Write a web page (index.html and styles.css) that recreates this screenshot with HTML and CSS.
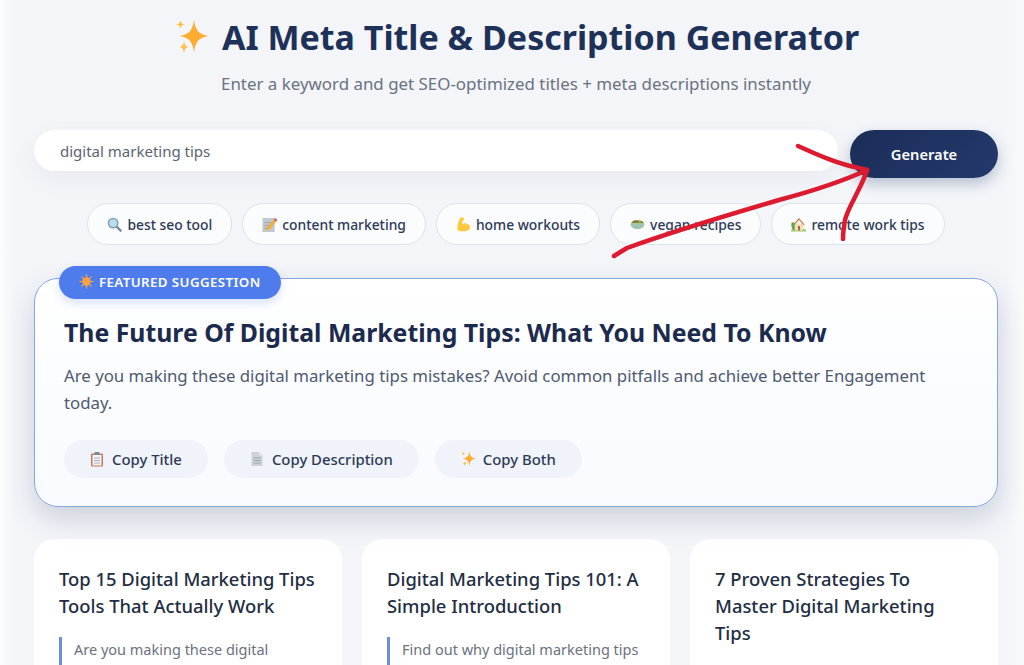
FILE: index.html
```html
<!DOCTYPE html>
<html lang="en">
<head>
    <meta charset="UTF-8">
    <meta name="viewport" content="width=device-width, initial-scale=1.0">
    <title>AI Meta Title &amp; Description Generator</title>
    <link rel="stylesheet" href="styles.css">
</head>
<body>
    <svg class="defs" width="0" height="0" aria-hidden="true">
        <symbol id="sparkles" viewBox="0 0 36 36">
            <path fill="#ffac33" d="M21 .5C22.500 11 25 15 35.500 17 25 19 22.500 23 21 33.500 19.500 23 17 19 6.500 17 17 15 19.500 11 21 .5z"/>
            <path fill="#ffc14d" d="M7.500 1C8 4 9 5 12 5.500 9 6 8 7 7.500 10 7 7 6 6 3 5.500 6 5 7 4 7.500 1zM11 22c.5 3.500 1.500 5 4.500 6-3 1-4 2.500-4.500 6-.5-3.500-1.500-5-4.500-6 3-1 4-2.500 4.500-6z"/>
        </symbol>
        <symbol id="magnifier" viewBox="0 0 16 16">
            <path stroke="#7f8b96" stroke-width="2.600" stroke-linecap="round" d="M10 10l4.500 4.500"/>
            <circle cx="6.500" cy="6.500" r="5" fill="#b9dcef" stroke="#84a0b2" stroke-width="1.600"/>
        </symbol>
        <symbol id="memo" viewBox="0 0 16 16">
            <rect x="0.500" y="1" width="13" height="15" fill="#c3c8cc"/>
            <path stroke="#9aa2a9" d="M2.500 6h9M2.500 9h9M2.500 12h6"/>
            <path fill="#eeb03a" d="M5 11.500L12.500 3l2.500 2-7.500 8.500-3.500 1z"/>
            <path fill="#d9545c" d="M12.500 3l1.500-2 2.500 2-1.500 2z"/>
        </symbol>
        <symbol id="muscle" viewBox="0 0 16 16">
            <path fill="#ffc83d" d="M4.500 1c1.800-.8 3.800-.2 4.200 1 .3 1-.7 1.700-1.700 2L6.500 8c1.700-1.500 4.300-1.600 6.200-.5 2.300 1.400 2.800 4 1.500 5.800-1.300 1.600-4.200 2-7.200 1.900-2.400-.1-4.600-.6-5.400-2C0.800 10.800 2.500 5 4.500 1z"/>
        </symbol>
        <symbol id="salad" viewBox="0 0 16 16">
            <path fill="#5c913b" d="M1 7c.5-2.500 3.500-3.500 7-3.500s6.500 1 7 3.500z"/>
            <circle cx="5.500" cy="4.800" r="1.400" fill="#c9584a"/>
            <circle cx="10.500" cy="4.500" r="1.300" fill="#d8b04a"/>
            <path fill="#9fc4b0" d="M.5 7.500h15c0 3-3.300 5.500-7.500 5.500S.5 10.500.5 7.500z"/>
        </symbol>
        <symbol id="house" viewBox="0 0 16 16">
            <path fill="#9cc46f" d="M0 15.500c0-2 1-3 3-3h10c2 0 3 1 3 3z"/>
            <path fill="#f3dfae" d="M4 7h9v7.500H4z"/>
            <path fill="#c9804a" d="M2.500 8L8.500 1l6 7-1 .8-5-5.500-5 5.500z"/>
            <path fill="#8b6a4a" d="M7.500 9.500h2v5h-2z"/>
            <path fill="#6ba34a" d="M.5 6.500c1-1.500 2.500-1 3.500 0v7H2C.5 11.500 0 9 .5 6.500z"/>
        </symbol>
        <symbol id="sun" viewBox="0 0 16 16">
            <path stroke="#f7a541" stroke-width="1.300" stroke-linecap="round" d="M8 1v14M1 8h14M3 3l10 10M13 3L3 13"/>
            <circle cx="8" cy="8" r="4.500" fill="#f9a03f"/>
        </symbol>
        <symbol id="clipboard" viewBox="0 0 16 16">
            <rect x="2" y="2.500" width="12" height="13" rx="1" fill="#d0765a"/>
            <rect x="3.500" y="4" width="9" height="10.500" fill="#f2f4f5"/>
            <rect x="5.500" y="1" width="5" height="3" fill="#7d8b98"/>
            <path stroke="#a9b2ba" d="M5 7h6M5 9.500h6M5 12h6"/>
        </symbol>
        <symbol id="page" viewBox="0 0 16 16">
            <path fill="#ccd2d8" d="M2.500 1H10l3.500 3.500V15h-11z"/>
            <path fill="#e6e9ec" d="M10 1l3.500 3.500H10z"/>
            <path stroke="#9aa5ae" d="M4.500 7h7M4.500 9.500h7M4.500 12h7"/>
        </symbol>
    </svg>

    <main class="container">
        <header class="hero">
            <h1><svg class="hero-icon"><use href="#sparkles"/></svg>AI Meta Title &amp; Description Generator</h1>
            <p>Enter a keyword and get SEO-optimized titles + meta descriptions instantly</p>
        </header>

        <form class="search-row">
            <input class="keyword-input" type="text" value="digital marketing tips">
            <button class="generate-btn" type="button">Generate</button>
        </form>

        <div class="chips">
            <button class="chip" type="button"><svg class="icon"><use href="#magnifier"/></svg>best seo tool</button>
            <button class="chip" type="button"><svg class="icon"><use href="#memo"/></svg>content marketing</button>
            <button class="chip" type="button"><svg class="icon"><use href="#muscle"/></svg>home workouts</button>
            <button class="chip" type="button"><svg class="icon"><use href="#salad"/></svg>vegan recipes</button>
            <button class="chip" type="button"><svg class="icon"><use href="#house"/></svg>remote work tips</button>
        </div>

        <section class="featured">
            <span class="badge"><svg class="icon"><use href="#sun"/></svg>FEATURED SUGGESTION</span>
            <h2>The Future Of Digital Marketing Tips: What You Need To Know</h2>
            <p>Are you making these digital marketing tips mistakes? Avoid common pitfalls and achieve better Engagement today.</p>
            <div class="copy-actions">
                <button class="copy-btn" type="button"><svg class="icon"><use href="#clipboard"/></svg>Copy Title</button>
                <button class="copy-btn" type="button"><svg class="icon"><use href="#page"/></svg>Copy Description</button>
                <button class="copy-btn" type="button"><svg class="icon"><use href="#sparkles"/></svg>Copy Both</button>
            </div>
        </section>

        <section class="results">
            <article class="card">
                <h3>Top 15 Digital Marketing Tips Tools That Actually Work</h3>
                <p>Are you making these digital</p>
            </article>
            <article class="card">
                <h3>Digital Marketing Tips 101: A Simple Introduction</h3>
                <p>Find out why digital marketing tips</p>
            </article>
            <article class="card">
                <h3>7 Proven Strategies To Master Digital Marketing Tips</h3>
            </article>
        </section>

        <svg class="scribble" viewBox="0 0 1024 665" aria-hidden="true">
            <path d="M798 146c20 9 40 18 61 22l8 2"/>
            <path d="M614 256l13-8c50-18 101-33 152-48 30-8 62-18 88-30"/>
            <path d="M867 170c-3 10-8 19-12 27-4 8-8 15-10 23-1 6-2 13-2 19"/>
        </svg>
    </main>
</body>
</html>
```

FILE: styles.css
```css
* {
    box-sizing: border-box;
}
html, body {
    height: 665px;
    margin: 0;
    overflow: hidden;
}
body {
    font-family: "Noto Sans", Arial, sans-serif;
    background: linear-gradient(90deg, #fdfdfe 0, #f3f5f9 14px, #f3f5f9 1006px, #f9fafc 1024px);
    color: #1e3158;
}
.defs {
    position: absolute;
}
.container {
    position: relative;
    height: 665px;
    padding: 0 26px 0 34px;
}
.icon {
    width: 15px;
    height: 15px;
    flex: none;
}

.hero {
    text-align: center;
    padding-top: 13px;
}
.hero h1 {
    display: flex;
    justify-content: center;
    align-items: center;
    gap: 13px;
    margin: 0;
    font-size: 34px;
    line-height: 48px;
    font-weight: 700;
    color: #1e3158;
}
.hero-icon {
    width: 36px;
    height: 36px;
}
.hero p {
    margin: 11px 0 0;
    font-size: 16.900px;
    line-height: 24px;
    color: #6b7280;
}

.search-row {
    display: flex;
    align-items: flex-start;
    gap: 12px;
    margin-top: 34px;
}
.keyword-input {
    flex: 1;
    height: 41px;
    padding: 0 26px;
    border: none;
    border-radius: 21px;
    background: #fff;
    font: 15px "Noto Sans", Arial, sans-serif;
    color: #5b6472;
    box-shadow: 0 8px 24px rgba(30, 49, 88, 0.05);
}
.generate-btn {
    width: 148px;
    height: 48px;
    border: none;
    border-radius: 24px;
    background: linear-gradient(135deg, #1b2d58, #24396c);
    color: #fff;
    font: 600 14.700px "Noto Sans", Arial, sans-serif;
    box-shadow: 0 6px 14px rgba(30, 50, 96, 0.28);
}

.chips {
    display: flex;
    justify-content: center;
    gap: 10px;
    margin-top: 25px;
}
.chip {
    display: flex;
    align-items: center;
    gap: 5px;
    height: 42px;
    padding: 0 19px;
    border: 1px solid #dfe3ea;
    border-radius: 21px;
    background: #fbfcfe;
    font: 500 13.850px "Noto Sans", Arial, sans-serif;
    color: #2c3a55;
}

.featured {
    position: relative;
    height: 229px;
    margin-top: 33px;
    padding: 37px 29px 0;
    border: 1px solid #86a6e0;
    border-radius: 24px;
    background: linear-gradient(180deg, #fff, #f8faff);
    box-shadow: 0 12px 28px rgba(30, 49, 88, 0.18);
}
.badge {
    position: absolute;
    top: -13px;
    left: 24px;
    display: flex;
    align-items: center;
    gap: 5px;
    height: 33px;
    padding: 0 20px 2px;
    border-radius: 17px;
    background: #4f7cec;
    color: #fff;
    font-size: 13.300px;
    font-weight: 600;
    letter-spacing: 0.4px;
    box-shadow: 0 4px 10px rgba(79, 124, 236, 0.22);
}
.featured h2 {
    margin: 0;
    font-size: 24.800px;
    line-height: 32px;
    font-weight: 700;
    color: #1c2b4d;
}
.featured p {
    margin: 14px 0 0;
    font-size: 16.800px;
    line-height: 27px;
    color: #4e5a70;
}
.copy-actions {
    display: flex;
    gap: 16px;
    margin-top: 24px;
}
.copy-btn {
    display: flex;
    align-items: center;
    gap: 7px;
    height: 38px;
    padding: 0 26px 1px 25px;
    border: none;
    border-radius: 19px;
    background: #f0f3fa;
    font: 500 14.900px "Noto Sans", Arial, sans-serif;
    color: #2c3a55;
}
.copy-btn .icon {
    width: 16px;
    height: 16px;
}

.results {
    display: grid;
    grid-template-columns: repeat(3, 1fr);
    gap: 20px;
    height: 126px;
    margin-top: 32px;
    overflow: hidden;
}
.card {
    height: 240px;
    padding: 26px 25px;
    border-radius: 20px;
    background: #fff;
}
.card h3 {
    margin: 0;
    font-size: 18.400px;
    line-height: 27px;
    font-weight: 500;
    color: #222d42;
}
.card p {
    height: 60px;
    margin: 18px 0 0;
    padding-left: 12px;
    border-left: 3px solid #6a8fd8;
    font-size: 14.500px;
    line-height: 24px;
    color: #6b7280;
}

.scribble {
    position: absolute;
    top: 0;
    left: 0;
    width: 1024px;
    height: 665px;
    pointer-events: none;
    fill: none;
    stroke: #dc1a30;
    stroke-width: 4.500;
    stroke-linecap: round;
    stroke-linejoin: round;
}
```
